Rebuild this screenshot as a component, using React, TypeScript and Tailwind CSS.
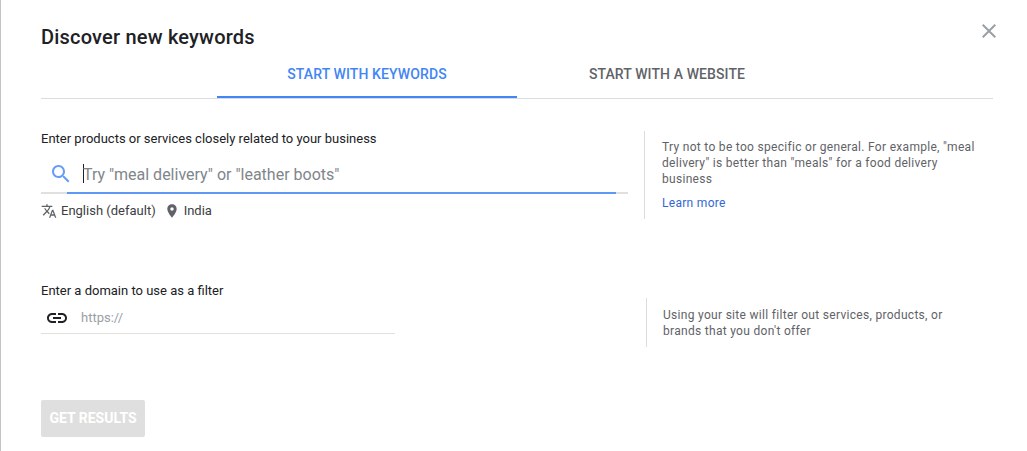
const TranslateIcon = ({ className }: { className?: string }) => (
  <svg className={className} fill="currentColor" viewBox="0 0 24 24">
    <path d="M12.87 15.07l-2.54-2.51.03-.03c1.74-1.94 2.98-4.17 3.71-6.53H17V4h-7V2H8v2H1v1.99h11.17C11.5 7.92 10.43 9.75 9 11.35 8.07 10.32 7.3 9.19 6.69 8h-2c.73 1.63 1.73 3.17 2.98 4.56l-5.09 5.02L4 19l5-5 3.11 3.11.76-2.04zM18.5 10h-2L12 22h2l1.12-3h4.75L21 22h2l-4.5-12zm-2.62 7l1.62-4.33L19.12 17h-3.24z" />
  </svg>
);

const PlaceIcon = ({ className }: { className?: string }) => (
  <svg className={className} fill="currentColor" viewBox="0 0 24 24">
    <path d="M12 2C8.13 2 5 5.13 5 9c0 5.25 7 13 7 13s7-7.75 7-13c0-3.87-3.13-7-7-7zm0 9.5c-1.38 0-2.5-1.12-2.5-2.5s1.12-2.5 2.5-2.5 2.5 1.12 2.5 2.5-1.12 2.5-2.5 2.5z" />
  </svg>
);

const LinkIcon = ({ className }: { className?: string }) => (
  <svg className={className} fill="currentColor" viewBox="0 0 24 24">
    <path d="M3.9 12c0-1.71 1.39-3.1 3.1-3.1h4V7H7c-2.76 0-5 2.24-5 5s2.24 5 5 5h4v-1.9H7c-1.71 0-3.1-1.39-3.1-3.1zM8 13h8v-2H8v2zm9-6h-4v1.9h4c1.71 0 3.1 1.39 3.1 3.1s-1.39 3.1-3.1 3.1h-4V17h4c2.76 0 5-2.24 5-5s-2.24-5-5-5z" />
  </svg>
);

const SearchIcon = ({ className }: { className?: string }) => (
  <svg className={className} fill="currentColor" viewBox="0 0 24 24">
    <path d="M15.5 14h-.79l-.28-.27C15.41 12.59 16 11.11 16 9.5 16 5.91 13.09 3 9.5 3S3 5.91 3 9.5 5.91 16 9.5 16c1.61 0 3.09-.59 4.23-1.57l.27.28v.79l5 4.99L20.49 19l-4.99-5zm-6 0C7.01 14 5 11.99 5 9.5S7.01 5 9.5 5 14 7.01 14 9.5 11.99 14 9.5 14z" />
  </svg>
);

const CloseIcon = ({ className }: { className?: string }) => (
  <svg className={className} fill="currentColor" viewBox="0 0 24 24">
    <path d="M19 6.41L17.59 5 12 10.59 6.41 5 5 6.41 10.59 12 5 17.59 6.41 19 12 13.41 17.59 19 19 17.59 13.41 12z" />
  </svg>
);

export default function App() {
  return (
    <div className="relative w-[1027px] h-[451px] overflow-hidden bg-white border-l border-[#c4c4c4] pl-[40px] pr-[34px] font-['Roboto',sans-serif]">
      <button className="absolute left-[976px] top-[19px] text-[#9aa0a6]">
        <CloseIcon className="w-[24px] h-[24px]" />
      </button>

      <h1 className="pt-[25px] text-[20px] leading-[24px] font-medium tracking-[0.2px] text-[#202124]">Discover new keywords</h1>

      {/* tabs */}
      <div className="mt-[8px] h-[42px] flex pl-[176px] border-b border-[#dadce0]">
        <div className="w-[300px] h-[41px] border-b-2 border-[#4285f4] text-center text-[14px] leading-[34px] font-medium tracking-[0.1px] text-[#4285f4]">START WITH KEYWORDS</div>
        <div className="w-[300px] text-center text-[14px] leading-[34px] font-medium tracking-[0.1px] text-[#5f6368]">START WITH A WEBSITE</div>
      </div>

      {/* keywords */}
      <div className="mt-[31px] flex">
        <div className="w-[587px]">
          <div className="pt-[1px] text-[13px] leading-[15px] text-[#202124]">Enter products or services closely related to your business</div>
          <div className="mt-[10px] flex border-b-2 border-[#e0e0e0] h-[38px]">
            <div className="w-[26px] pt-[6px] pl-[9px] text-[#669df6]">
              <SearchIcon className="w-[24px] h-[24px] -ml-[1px]" />
            </div>
            <div className="w-[549px] h-[38px] border-b-2 border-[#5e97f6] flex items-start pl-[16px] pt-[9px]">
              <span className="w-px h-[19px] bg-[#202124] -mt-[1px]" />
              <span className="-ml-[1px] text-[16px] leading-[20px] text-[#80868b]">Try "meal delivery" or "leather boots"</span>
            </div>
          </div>
          <div className="mt-[8px] flex items-center text-[13px] leading-[18px] text-[#3c4043]">
            <TranslateIcon className="w-[16px] h-[16px] text-[#5f6368]" />
            <span className="ml-[4px]">English (default)</span>
            <PlaceIcon className="ml-[8px] w-[16px] h-[16px] text-[#5f6368]" />
            <span className="ml-[4px]">India</span>
          </div>
        </div>
        <div className="ml-[16px] mt-[1px] h-[88px] w-[330px] border-l border-[#dadce0] pl-[17px] pt-[8px] text-[12px] leading-[16px] tracking-[0.3px] text-[#5f6368]">
          <p className="w-[316px]">Try not to be too specific or general. For example, "meal delivery" is better than "meals" for a food delivery business</p>
          <a className="block mt-[8px] text-[#3367d6]">Learn more</a>
        </div>
      </div>

      {/* domain filter */}
      <div className="mt-[63px] flex">
        <div className="w-[354px]">
          <div className="text-[13px] leading-[15px] text-[#202124]">Enter a domain to use as a filter</div>
          <div className="mt-[5px] h-[31px] border-b border-[#e0e0e0] flex items-center pl-[4px]">
            <LinkIcon className="w-[24px] h-[24px] text-[#202124]" />
            <span className="ml-[12px] text-[13px] text-[#9aa0a6]">https://</span>
          </div>
        </div>
        <div className="ml-[251px] mt-[15px] h-[49px] w-[330px] border-l border-[#dadce0] pl-[16px] pt-[9px] text-[12px] leading-[16px] tracking-[0.3px] text-[#5f6368]">
          <p className="w-[316px]">Using your site will filter out services, products, or brands that you don't offer</p>
        </div>
      </div>

      <button className="block mt-[53px] w-[104px] h-[37px] rounded-[2px] bg-[#dfdfdf] text-[14px] font-bold text-white">GET RESULTS</button>
    </div>
  );
}
